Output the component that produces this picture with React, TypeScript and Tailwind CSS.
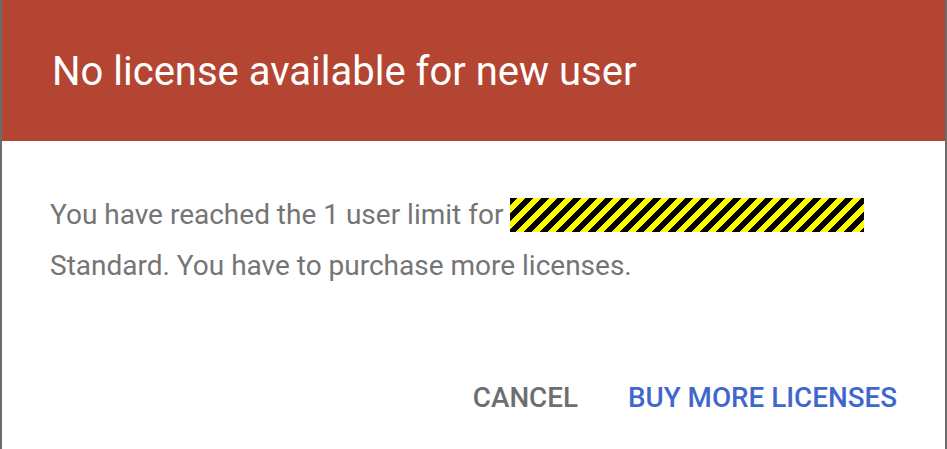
import React from "react"

const App: React.FC = () => {
  return (
    <div className="w-[947px] h-[449px] bg-white border-l-2 border-r-2 border-[#6b6b6b] flex flex-col font-['Roboto',_'Liberation_Sans',_sans-serif]">
      <div className="h-[141px] bg-[#b54533] flex items-center pl-[50px] shrink-0">
        <h1 className="text-[40px] leading-none text-white font-normal pt-[2px]">
          No license available for new user
        </h1>
      </div>
      <div className="pl-[48px] pr-[40px] pt-[48px] text-[28px] leading-[51px] text-[#757575]">
        You have reached the 1 user limit for{" "}
        <span className="inline-block w-[354px] h-[34px] align-[-8px] bg-[repeating-linear-gradient(135deg,#000_0_5.6px,#ffff00_5.6px_11.3px)]" />
        <br />
        Standard. You have to purchase more licenses.
      </div>
      <div className="mt-auto flex justify-end items-center gap-[50px] pr-[48px] pb-[37px]">
        <button className="text-[27.8px] font-medium uppercase text-[#6e6e6e] leading-none">
          Cancel
        </button>
        <button className="text-[27.8px] font-medium uppercase text-[#3f67cc] leading-none">
          Buy more licenses
        </button>
      </div>
    </div>
  )
}

export default App
